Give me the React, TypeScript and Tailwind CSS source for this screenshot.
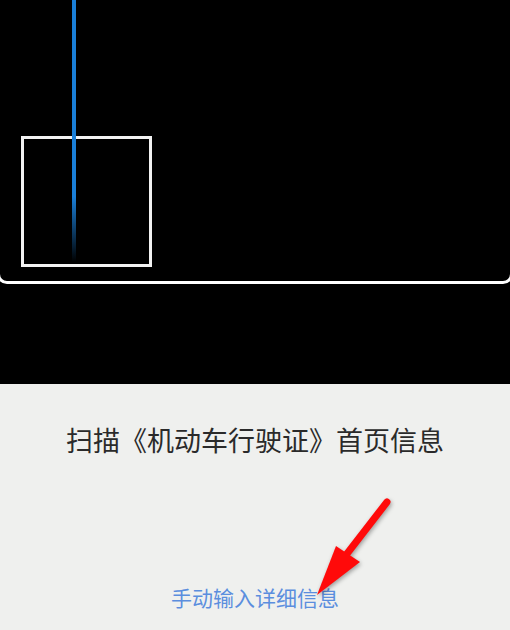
export default function App() {
  return (
    <div className="flex h-[630px] w-[510px] flex-col overflow-hidden bg-[#eff0ee] font-['Noto_Sans_CJK_SC',sans-serif]">
      {/* camera preview */}
      <div className="relative h-[384px] shrink-0 overflow-hidden bg-black">
        <div className="absolute -left-[3px] -right-[3px] -top-[20px] h-[304px] rounded-[10px] border-[3px] border-white" />
        <div className="absolute left-[21px] top-[136px] h-[131px] w-[131px] border-[3px] border-[#f2f2f2]" />
        <div className="absolute left-[72px] top-0 h-[262px] w-[4px] bg-gradient-to-b from-[#1a7fd8] from-75% to-transparent" />
      </div>

      <div className="relative flex flex-1 flex-col items-center">
        <p className="pt-[38px] text-[27px] leading-[36px] text-[#2a2a2a]">
          扫描《机动车行驶证》首页信息
        </p>
        <button className="mt-[125px] text-[21px] leading-[28px] text-[#5b8ede]">
          手动输入详细信息
        </button>

        <svg
          className="pointer-events-none absolute left-[300px] top-[106px] drop-shadow-[1px_2px_2px_rgba(0,0,0,0.35)]"
          width="100"
          height="110"
          viewBox="0 0 100 110"
        >
          <line x1="87" y1="12" x2="46" y2="65" stroke="#ff0a0a" strokeWidth="7" strokeLinecap="round" />
          <polygon points="36,56 60,72 17,105" fill="#ff0a0a" />
        </svg>
      </div>
    </div>
  );
}
